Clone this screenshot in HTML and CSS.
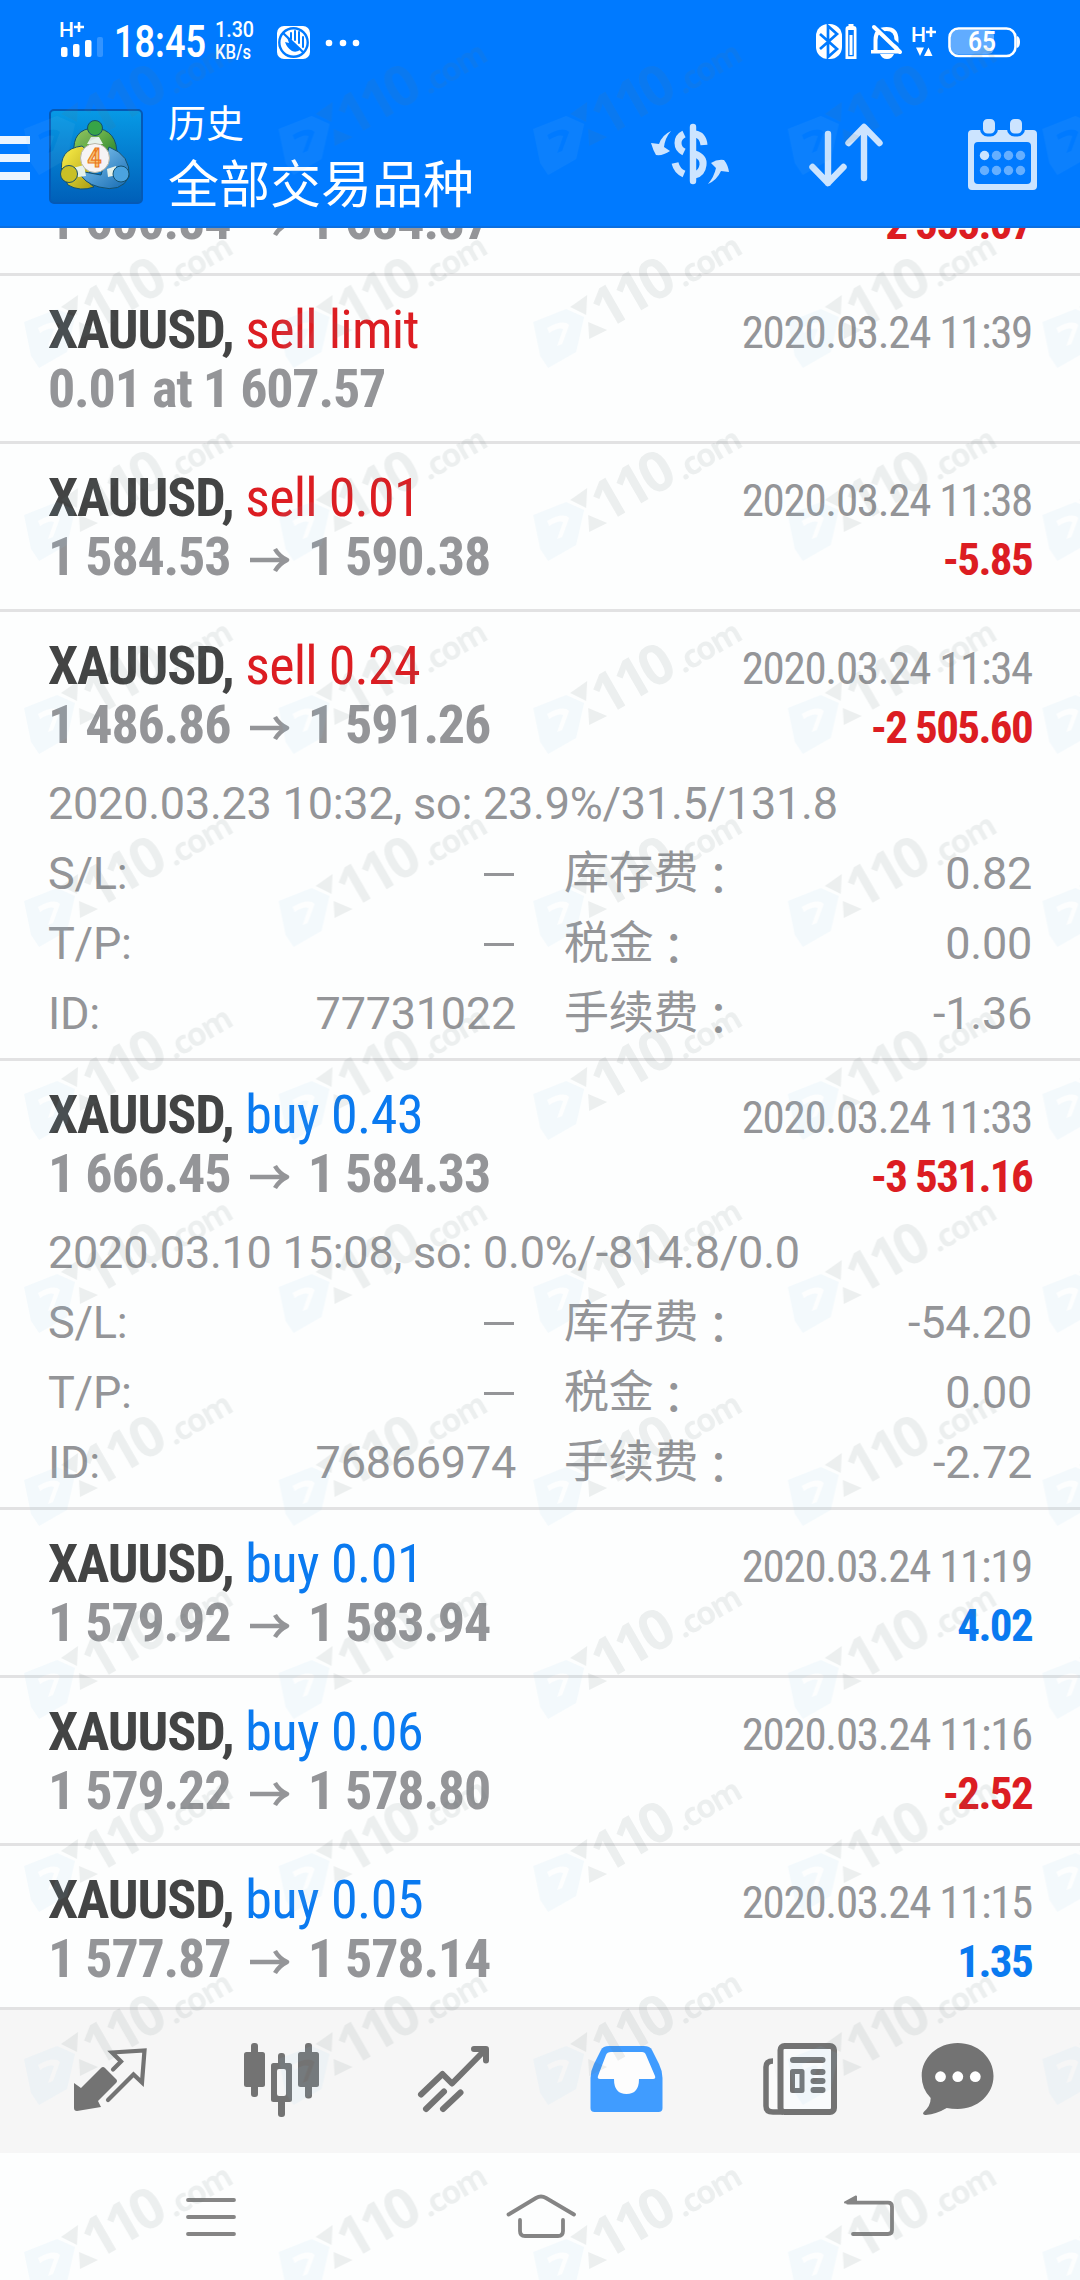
FILE: index.html
```html
<!DOCTYPE html>
<html lang="zh-CN">
<head>
<meta charset="utf-8">
<title>历史</title>
<link rel="stylesheet" href="styles.css">
</head>
<body>
<div class="screen">
  <header class="header">
    <div class="status">
      <svg class="status-left" viewBox="50 12 320 56" width="320" height="56" fill="#fff">
        <text x="59" y="37" font-size="20" font-weight="500" textLength="15" lengthAdjust="spacingAndGlyphs">H</text>
        <path d="M79 22v10M74 27h10" stroke="#fff" stroke-width="2.6"/>
        <rect x="61" y="47" width="6.5" height="10" rx="2"/><rect x="73" y="44" width="6.5" height="13" rx="2"/><rect x="85" y="40" width="6.5" height="17" rx="2"/><rect x="97" y="37" width="6" height="20" rx="2" opacity=".2"/>
        <text x="114" y="57" font-size="45" font-weight="600" textLength="92" lengthAdjust="spacingAndGlyphs">18:45</text>
        <text x="215" y="37" font-size="22.500" font-weight="500" textLength="39" lengthAdjust="spacingAndGlyphs">1.30</text>
        <text x="215" y="59" font-size="20" font-weight="500" textLength="36" lengthAdjust="spacingAndGlyphs">KB/s</text>
        <rect x="277" y="26" width="33" height="33" rx="7"/>
        <circle cx="293.500" cy="42.500" r="14.200" fill="none" stroke="#007aff" stroke-width="2.400"/>
        <path d="M291 39v-6M295 40v-9M299 43v-11M303 47v-10" stroke="#007aff" stroke-width="2" stroke-linecap="round"/>
        <path d="M287 37l14 12q-4 4-9 2-5-3-7-9l4 1z" fill="#007aff"/>
        <path d="M283 33L304 53" stroke="#007aff" stroke-width="2.400"/>
        <circle cx="329" cy="43" r="3.3"/><circle cx="343" cy="43" r="3.3"/><circle cx="356" cy="43" r="3.3"/>
      </svg>
      <svg class="status-right" viewBox="806 12 220 56" width="220" height="56" fill="#fff">
        <rect x="816" y="24" width="26" height="35" rx="12"/>
        <path d="M820 34l17 15-9 8V26l9 8-17 15" fill="none" stroke="#007aff" stroke-width="2.7"/>
        <path d="M845.500 29q0-3 3-3v-2h5v2q3 0 3 3v30h-11zM848.200 30v26.300h5.600V30z" fill-rule="evenodd"/><rect x="849.500" y="35" width="3" height="20"/>
        <path d="M875.500 51V40q0-11 11-11 10 0 10 11v11" fill="none" stroke="#fff" stroke-width="4"/>
        <path d="M871 50h29v3.500h-29zM880 54h14q-2 5-7 5t-7-5"/>
        <path d="M876 26L903 49" stroke="#007aff" stroke-width="3"/><path d="M874 27L900 52" stroke="#fff" stroke-width="4" stroke-linecap="round"/>
        <text x="911" y="42" font-size="21" font-weight="500" textLength="15" lengthAdjust="spacingAndGlyphs">H</text>
        <path d="M931 27v10M926 32h10" stroke="#fff" stroke-width="2.600"/>
        <path d="M916 47.500h8l-4 8.500zM924 56h8.500l-4-8.500z"/>
        <rect x="951" y="30" width="43" height="24" rx="6" opacity=".38"/>
        <rect x="949.500" y="28.500" width="66" height="27.500" rx="9" fill="none" stroke="#fff" stroke-width="2.600"/>
        <path d="M1017 36q3 1 3 6t-3 6z"/>
        <text x="968" y="51" font-size="27" font-weight="600" textLength="28" lengthAdjust="spacingAndGlyphs">65</text>
      </svg>
    </div>
    <div class="appbar">
      <div class="menu"><i></i><i></i><i></i></div>
      <svg class="logo" viewBox="0 0 94 95" width="94" height="95">
        <defs>
          <linearGradient id="bg" x2="0" y2="1"><stop stop-color="#079ae6"/><stop offset="1" stop-color="#005fb8"/></linearGradient>
          <linearGradient id="gr" x2="1" y2="1"><stop stop-color="#9ed35e"/><stop offset="1" stop-color="#187a28"/></linearGradient>
          <linearGradient id="ye" x2="1" y2="1"><stop stop-color="#fff24a"/><stop offset="1" stop-color="#a99b12"/></linearGradient>
          <linearGradient id="bl" x2="1" y2="1"><stop stop-color="#8fd0f8"/><stop offset="1" stop-color="#1268b0"/></linearGradient>
        </defs>
        <rect x="1" y="1" width="92" height="93" rx="4" fill="url(#bg)" stroke="#0559b5" stroke-width="2"/>
        <g stroke="#14506d" stroke-width="1">
          <path d="M25 44q-2-24 20-25 24 1 23 29l-8 8H30z" fill="url(#gr)"/>
          <path d="M13 64q-4-24 20-27l10 8-4 28 6 5q-14 5-26-2z" fill="url(#ye)"/>
          <path d="M60 38q22 8 20 30-8 16-30 10-16-4-20-16l22 4z" fill="url(#bl)"/>
          <path d="M38 35l4-7h8l4 7zM24 59l11-3 2 11-8 1zM58 60l9-3 1 9-9 2z" fill="#e6f2ea" stroke="none"/>
          <circle cx="46" cy="19" r="7.500" fill="#37a447"/><circle cx="20" cy="65" r="8.500" fill="#c9c026"/><circle cx="72" cy="65" r="8" fill="#4ba3df"/>
          <circle cx="46" cy="49" r="14.500" fill="#f6f4f5" stroke="#b8b8a8"/>
        </g>
        <text x="38.500" y="58" font-size="26" font-weight="700" fill="#f5c478" stroke="#ec7a1d" stroke-width="1.200" textLength="14" lengthAdjust="spacingAndGlyphs">4</text>
      </svg>
      <div class="titles">
        <div class="title-small">历史</div>
        <div class="title-main">全部交易品种</div>
      </div>
      <svg class="actions" viewBox="640 112 410 86" width="410" height="86" fill="none" stroke="#cce4ff" stroke-width="6.400" stroke-linecap="round" stroke-linejoin="round">
        <path d="M693 127v54"/>
        <g stroke-width="7" stroke-linecap="butt"><path d="M684 134q-6 3-6 9t6 9M675 163q2 8 9 11"/><path d="M695 134q8 1 9 11"/><path d="M695 154q9 3 8 11-1 8-8 10"/></g>
        <path d="M671 131q-9 4-12 13l-8-1q2 7 5 12 7 1 14-4l-6-4q1-9 7-16zM708 184q9-4 13-13l8 1q-1-7-5-12-7-1-13 3l5 5q-2 9-8 16z" fill="#cce4ff" stroke="none"/>
        <path d="M828 134v49M812.500 167L828 183l15.500-16M864 178v-50M848.500 143L864 127l15.500 16"/>
        <g fill="#cce4ff" stroke="none">
          <path fill-rule="evenodd" d="M972 130h61q4 0 4 4v52q0 4-4 4h-61q-4 0-4-4v-52q0-4 4-4zM978 142q-4 0-4 4v34q0 4 4 4h49q4 0 4-4v-34q0-4-4-4z"/>
          <g stroke="#007aff" stroke-width="3"><rect x="981.500" y="117.500" width="15" height="17.500" rx="6"/><rect x="1008.500" y="117.500" width="15" height="17.500" rx="6"/></g>
          <circle cx="984.500" cy="155.500" r="4.700"/>
          <g fill="#66afff"><circle cx="996.500" cy="155.500" r="4.700"/><circle cx="1008.500" cy="155.500" r="4.700"/><circle cx="1020.500" cy="155.500" r="4.700"/><circle cx="984.500" cy="170.500" r="4.700"/><circle cx="996.500" cy="170.500" r="4.700"/><circle cx="1008.500" cy="170.500" r="4.700"/><circle cx="1020.500" cy="170.500" r="4.700"/></g>
        </g>
      </svg>
    </div>
  </header>

  <main class="list">
    <article class="deal deal-scrolled">
      <div class="line"><span class="name"><b>XAUUSD,</b> <span class="sell">sell 0.24</span></span><span class="date">2020.03.24 11:40</span></div>
      <div class="line"><span class="price">1 600.84 <svg class="arrow" viewBox="0 0 40 26"><path d="M0 13h35M25 2q4 7 12 11-8 4-12 11"/></svg> 1 684.87</span><span class="amount sell">2 555.07</span></div>
    </article>
    <article class="deal">
      <div class="line"><span class="name"><b>XAUUSD,</b> <span class="sell">sell limit</span></span><span class="date">2020.03.24 11:39</span></div>
      <div class="line"><span class="price">0.01 at 1 607.57</span></div>
    </article>
    <article class="deal">
      <div class="line"><span class="name"><b>XAUUSD,</b> <span class="sell">sell 0.01</span></span><span class="date">2020.03.24 11:38</span></div>
      <div class="line"><span class="price">1 584.53 <svg class="arrow" viewBox="0 0 40 26"><path d="M0 13h35M25 2q4 7 12 11-8 4-12 11"/></svg> 1 590.38</span><span class="amount sell">-5.85</span></div>
    </article>
    <article class="deal">
      <div class="line"><span class="name"><b>XAUUSD,</b> <span class="sell">sell 0.24</span></span><span class="date">2020.03.24 11:34</span></div>
      <div class="line"><span class="price">1 486.86 <svg class="arrow" viewBox="0 0 40 26"><path d="M0 13h35M25 2q4 7 12 11-8 4-12 11"/></svg> 1 591.26</span><span class="amount sell">-2 505.60</span></div>
      <div class="details">
        <div class="note">2020.03.23 10:32, so: 23.9%/31.5/131.8</div>
        <div class="pair"><span>S/L:</span><i class="dash"></i></div><div class="pair"><span>库存费<span class="colon">：</span></span><span>0.82</span></div>
        <div class="pair"><span>T/P:</span><i class="dash"></i></div><div class="pair"><span>税金<span class="colon">：</span></span><span>0.00</span></div>
        <div class="pair"><span>ID:</span><span>77731022</span></div><div class="pair"><span>手续费<span class="colon">：</span></span><span>-1.36</span></div>
      </div>
    </article>
    <article class="deal">
      <div class="line"><span class="name"><b>XAUUSD,</b> <span class="buy">buy 0.43</span></span><span class="date">2020.03.24 11:33</span></div>
      <div class="line"><span class="price">1 666.45 <svg class="arrow" viewBox="0 0 40 26"><path d="M0 13h35M25 2q4 7 12 11-8 4-12 11"/></svg> 1 584.33</span><span class="amount sell">-3 531.16</span></div>
      <div class="details">
        <div class="note">2020.03.10 15:08, so: 0.0%/-814.8/0.0</div>
        <div class="pair"><span>S/L:</span><i class="dash"></i></div><div class="pair"><span>库存费<span class="colon">：</span></span><span>-54.20</span></div>
        <div class="pair"><span>T/P:</span><i class="dash"></i></div><div class="pair"><span>税金<span class="colon">：</span></span><span>0.00</span></div>
        <div class="pair"><span>ID:</span><span>76866974</span></div><div class="pair"><span>手续费<span class="colon">：</span></span><span>-2.72</span></div>
      </div>
    </article>
    <article class="deal">
      <div class="line"><span class="name"><b>XAUUSD,</b> <span class="buy">buy 0.01</span></span><span class="date">2020.03.24 11:19</span></div>
      <div class="line"><span class="price">1 579.92 <svg class="arrow" viewBox="0 0 40 26"><path d="M0 13h35M25 2q4 7 12 11-8 4-12 11"/></svg> 1 583.94</span><span class="amount buy">4.02</span></div>
    </article>
    <article class="deal">
      <div class="line"><span class="name"><b>XAUUSD,</b> <span class="buy">buy 0.06</span></span><span class="date">2020.03.24 11:16</span></div>
      <div class="line"><span class="price">1 579.22 <svg class="arrow" viewBox="0 0 40 26"><path d="M0 13h35M25 2q4 7 12 11-8 4-12 11"/></svg> 1 578.80</span><span class="amount sell">-2.52</span></div>
    </article>
    <article class="deal deal-last">
      <div class="line"><span class="name"><b>XAUUSD,</b> <span class="buy">buy 0.05</span></span><span class="date">2020.03.24 11:15</span></div>
      <div class="line"><span class="price">1 577.87 <svg class="arrow" viewBox="0 0 40 26"><path d="M0 13h35M25 2q4 7 12 11-8 4-12 11"/></svg> 1 578.14</span><span class="amount buy">1.35</span></div>
    </article>
  </main>

  <nav class="tabs">
    <svg viewBox="56 2037 108 89"><path d="M101 2068q2-2 4 0l11 11q2 2 0 4l-18 18 3 6-24 4q-3 0-3-3v-25l7 5z" fill="#737373"/><path d="M113 2069.500l8-8-9-9 32.500-2-2.500 32-8.500-8L108 2100" fill="none" stroke="#737373" stroke-width="4.200" stroke-linecap="round"/></svg>
    <svg viewBox="228 2037 108 89" fill="#737373"><rect x="244" y="2052" width="21" height="35" rx="2.500"/><rect x="251" y="2043" width="7" height="54" rx="3"/><rect x="298" y="2052" width="21" height="35" rx="2.500"/><rect x="305" y="2043" width="7" height="55.500" rx="3"/><rect x="278" y="2053" width="7" height="64" rx="3"/><rect x="271" y="2063" width="21" height="39" rx="2.500"/><rect x="277" y="2069" width="9" height="27" rx="2" fill="#f6f6f6"/></svg>
    <svg viewBox="400 2037 108 89" fill="none" stroke="#737373" stroke-width="6" stroke-linecap="round" stroke-linejoin="round"><path d="M421 2094.500l21.500-20.500 9.500 9.500L485 2050M474 2049h12v11.500M444 2091.500l-18 17.500M460.500 2092.500L443 2109"/></svg>
    <svg viewBox="572 2037 108 89"><path fill="#409cff" fill-rule="evenodd" d="M609 2046h35q6 0 8 4l7 14q3.500 7 3.500 14v30q0 4-4 4h-64q-4 0-4-4v-30q0-7 3.500-14l7-14q2-4 8-4z"/><path fill="#fdfdfd" d="M611 2052h31q3 0 4 3l9 21q1 3-2 3h-14q0 15-12.500 15T614 2079h-14q-3 0-2-3l8-21q1-3 5-3z"/></svg>
    <svg viewBox="744 2037 108 89"><path d="M773 2061q-7 0-7 6v39q0 6 7 6h10" fill="#fafafa" stroke="#737373" stroke-width="5.500"/><rect x="780.500" y="2046" width="53.500" height="66" rx="4" fill="#f9fbfc" stroke="#737373" stroke-width="6"/><rect x="792.500" y="2071.500" width="9.500" height="19" fill="none" stroke="#737373" stroke-width="5" stroke-linejoin="round"/><path d="M793 2060h29.500M813.500 2072h9M813.500 2081h9M813.500 2090h9" stroke="#737373" stroke-width="6" stroke-linecap="round"/></svg>
    <svg viewBox="916 2037 108 89"><path fill="#737373" d="M957.700 2043c20 0 35.800 14.500 35.800 33s-16 33-35.800 33q-6 0-11-1-10 6-21 7-4-.5-2-3 7-6 7-14-9-9-9-22c0-18.500 16-33 36-33z"/><g fill="#fff"><circle cx="940.500" cy="2076.700" r="5.400"/><circle cx="957.800" cy="2076.700" r="5.400"/><circle cx="975.300" cy="2076.700" r="5.400"/></g></svg>
  </nav>

  <nav class="system">
    <svg viewBox="171 2182 80 70"><path d="M188 2200h46M188 2217h46M188 2234h46"/></svg>
    <svg viewBox="500 2182 80 70"><path d="M508.500 2214.500L536 2198q5-3 10 0l28 16.500M520 2220v11q0 5 5 5h33q5 0 5-5v-11"/></svg>
    <svg viewBox="828 2182 80 70"><path d="M848 2202.700h40q4 0 4 4V2230q0 4-4 4h-35"/><path d="M845 2202.500l11-6v6z" fill="#858585" stroke-width="2"/></svg>
  </nav>

  <svg class="watermark" width="1080" height="2280" aria-hidden="true">
    <defs>
      <pattern id="mark" patternUnits="userSpaceOnUse" x="0" y="37" width="254.600" height="193">
        <path fill="#8ecdf0" fill-rule="evenodd" opacity=".085" d="M24 92l33-13 18 8-8 35-28 16-8-12zM38 98l2 5q9-6 14-4l-6 17 5-2 7-19q-6-6-22 3z"/>
        <g fill="#5b6e6e" opacity=".105">
          <path d="M61 77l17-12-1 20zM79 92l19 8-18 9z"/>
          <text class="mark-num" transform="translate(96 101) rotate(-30)" letter-spacing="-5">110</text>
          <text class="mark-com" transform="translate(174 58) rotate(-30)" textLength="71">.com</text>
        </g>
      </pattern>
    </defs>
    <rect y="37" width="1080" height="2243" fill="url(#mark)"/>
  </svg>
</div>
</body>
</html>
```
FILE: styles.css
```css
* { box-sizing: border-box; }
body { margin: 0; background: #fdfefe; font-family: Roboto, "Noto Sans CJK SC", sans-serif; }
svg text { font-family: Roboto, sans-serif; }
.screen { position: relative; width: 1080px; height: 2280px; display: flex; flex-direction: column; overflow: hidden; }

.header { height: 228px; flex: none; background: #007aff; color: #fff; border-bottom: 2px solid #0b6fe0; }
.status { display: flex; justify-content: space-between; padding: 12px 54px 0 50px; height: 84px; }
.appbar { display: flex; align-items: center; height: 142px; padding-right: 30px; }
.menu { display: flex; flex-direction: column; gap: 10px; width: 30px; margin-top: 6px; }
.menu i { height: 8px; background: #ebf5ff; }
.logo { margin: 2px 0 0 19px; }
.titles { margin-left: 25px; height: 118px; display: flex; flex-direction: column; padding-top: 2px; }
.title-small { font-size: 38px; line-height: 52px; }
.title-main { font-size: 51px; line-height: 72px; }
.actions { margin-left: auto; }

.list { height: 1779px; flex: none; overflow: hidden; color: #949598; }
.deal { padding: 24px 48px 23px; border-bottom: 3px solid #e2e2e3; }
.deal:has(.details) { padding-bottom: 9px; }
.deal-scrolled { margin-top: -120px; }
.deal-last { border-bottom: 0; }
.line { display: flex; justify-content: space-between; align-items: baseline; height: 59px; line-height: 59px; font-family: "Roboto Condensed", Roboto, sans-serif; font-stretch: condensed; white-space: pre; }
.name { font-size: 54px; letter-spacing: -0.750px; }
.name b { color: #434444; letter-spacing: -1.100px; }
.price { font-size: 54px; font-weight: 700; letter-spacing: -1.200px; }
.date { font-size: 45px; letter-spacing: -1.300px; }
.amount { font-size: 45px; font-weight: 700; letter-spacing: -1.650px; }
.sell { color: #dc1d22; }
.buy { color: #0a7af0; }
.name .buy { letter-spacing: -0.500px; }
.arrow { width: 40px; height: 26px; margin: 0 7px 2px 8px; fill: none; stroke: #949598; stroke-width: 4.500; stroke-linejoin: round; }

.details { display: grid; grid-template-columns: 468px 468px; column-gap: 48px; padding-top: 15px; font-size: 45px; line-height: 70px; letter-spacing: -0.240px; }
.note { grid-column: 1 / 3; height: 70px; }
.pair { display: flex; justify-content: space-between; align-items: center; height: 70px; }
.dash { width: 30px; height: 3px; background: #949598; margin: 0 2px 0 0; }
.colon { display: inline-block; line-height: 60px; margin: 4px 0 0 9px; vertical-align: -4px; height: 60px; }

.tabs { height: 146px; flex: none; border-top: 3px solid #e2e2e3; background: #f6f6f6; padding: 0 24px; display: grid; grid-template-columns: repeat(6, 172px); align-items: center; justify-items: center; }
.tabs svg { width: 108px; height: 89px; }
.system { flex: 1; display: flex; justify-content: space-between; align-items: center; padding: 0 172px 0 171px; }
.system svg { width: 80px; height: 70px; fill: none; stroke: #858585; stroke-width: 3.800; stroke-linecap: round; stroke-linejoin: round; }

.watermark { position: absolute; left: 0; top: 0; pointer-events: none; }
.mark-num { font: 700 56px "Open Sans", sans-serif; }
.mark-com { font: 700 32px "Open Sans", sans-serif; }
```
